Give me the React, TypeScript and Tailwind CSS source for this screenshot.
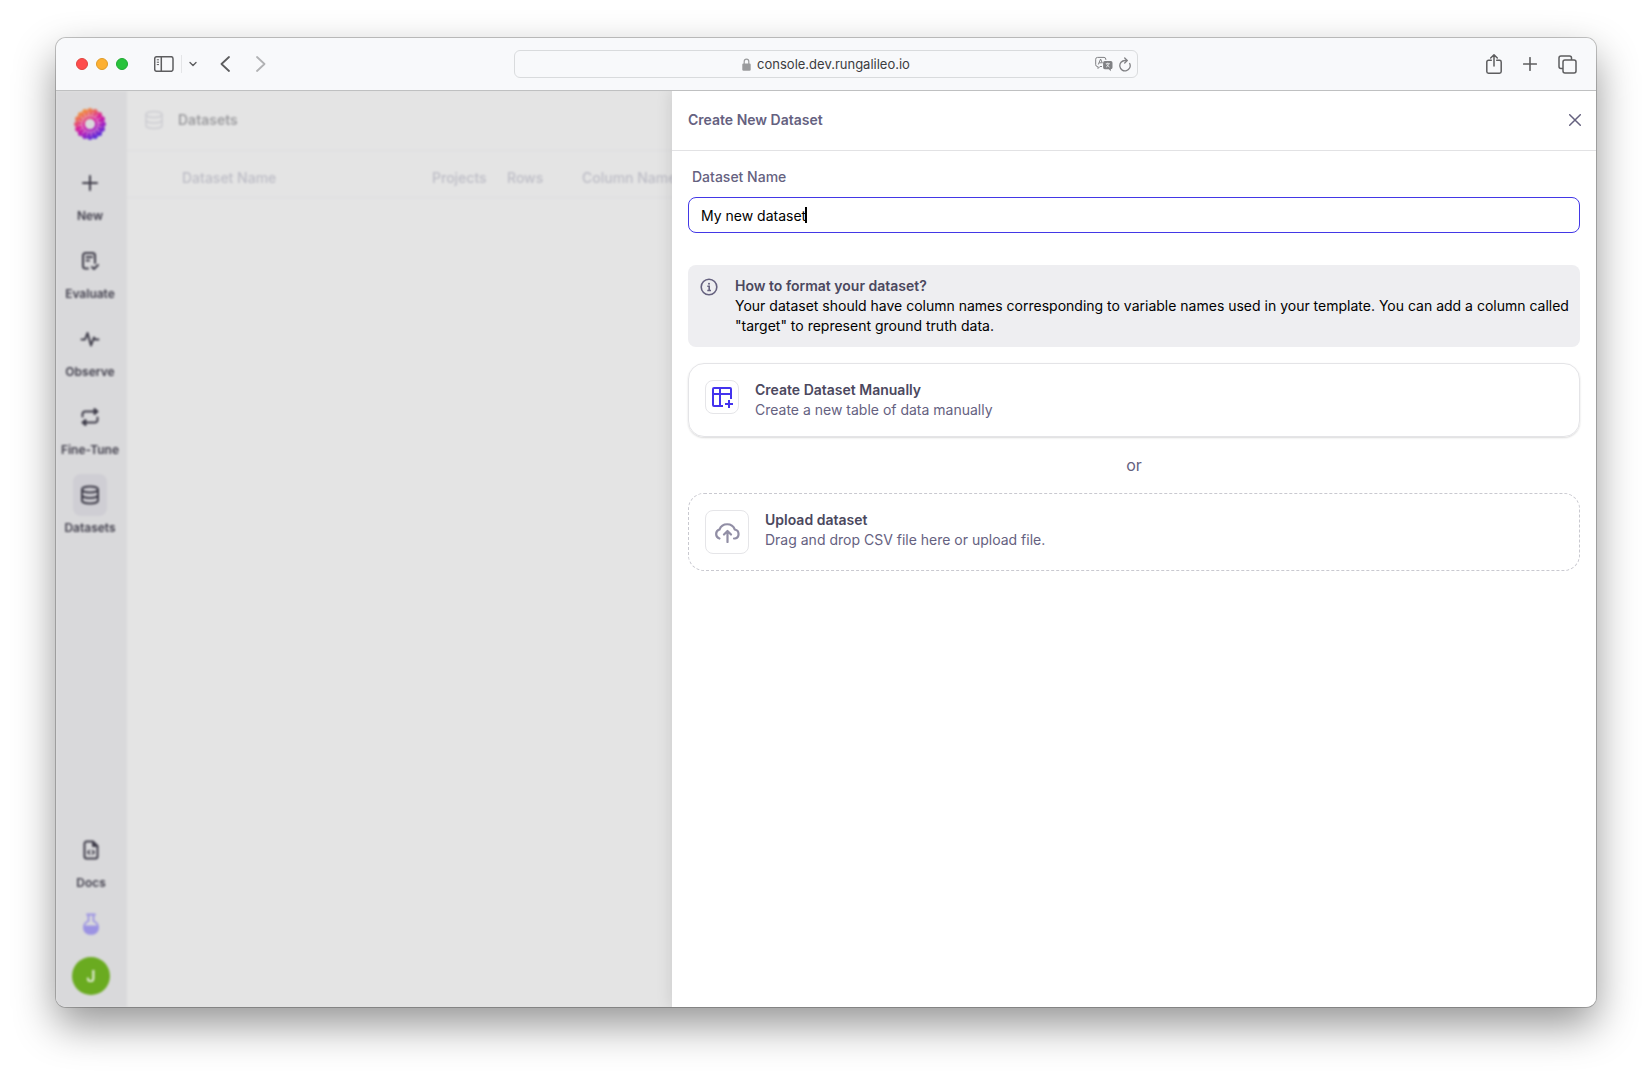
import { useState, type ReactNode } from "react";

function LogoIcon() {
  const petals = Array.from({ length: 16 }, (_, i) => i * 22.5);
  return (
    <svg viewBox="0 0 32 32" className="size-8" fill="none" aria-hidden="true">
      <defs>
        <linearGradient id="logo" gradientUnits="userSpaceOnUse" x1="8" y1="2" x2="24" y2="30">
          <stop offset="0" stopColor="#f39a3c" />
          <stop offset="0.2" stopColor="#ea6a5c" />
          <stop offset="0.45" stopColor="#d61e9c" />
          <stop offset="0.68" stopColor="#a820be" />
          <stop offset="1" stopColor="#4a30e0" />
        </linearGradient>
      </defs>
      <circle cx="16" cy="16" r="9.6" stroke="url(#logo)" strokeWidth="8.800" />
      {petals.map((a) => {
        const r = (a * Math.PI) / 180;
        return <circle key={a} cx={16 + Math.cos(r) * 13.3} cy={16 + Math.sin(r) * 13.3} r="2.6" fill="url(#logo)" />;
      })}
      {petals.map((a) => (
        <path
          key={a}
          d="M14.500 8.200c2.600.600 4.700-.800 4.700-3.600"
          transform={`rotate(${a} 16 16)`}
          stroke="#efc6e0"
          strokeWidth="0.900"
          strokeOpacity="0.800"
          strokeLinecap="round"
        />
      ))}
    </svg>
  );
}

function DatabaseIcon({ className, width = 2 }: { className: string; width?: number }) {
  return (
    <svg viewBox="0 0 20 20" className={className} fill="none" stroke="currentColor" strokeWidth={width} aria-hidden="true">
      <ellipse cx="10" cy="4.500" rx="8" ry="3" />
      <path d="M2 4.500v11c0 1.700 3.600 3 8 3s8-1.300 8-3v-11" />
      <path d="M2 10c0 1.700 3.600 3 8 3s8-1.300 8-3" />
    </svg>
  );
}

const stroke = {
  fill: "none",
  stroke: "currentColor",
  strokeWidth: 2,
  strokeLinecap: "round" as const,
  strokeLinejoin: "round" as const,
  "aria-hidden": true,
};

const icons: Record<string, ReactNode> = {
  New: (
    <svg viewBox="0 0 20 20" className="size-5" {...stroke}>
      <path d="M10 3v14M3 10h14" />
    </svg>
  ),
  Evaluate: (
    <svg viewBox="0 0 20 20" className="size-5" {...stroke}>
      <path d="M8 17.500H5.500A2.500 2.500 0 0 1 3 15V4.500A2.500 2.500 0 0 1 5.500 2h7A2.500 2.500 0 0 1 15 4.500V12" />
      <path d="M6.500 6H12M6.500 9.500H9" />
      <path d="m12 16 2 2 4-4" />
    </svg>
  ),
  Observe: (
    <svg viewBox="0 0 20 20" className="size-5" {...stroke}>
      <path d="M1.500 10.500H5L7.500 4l3.500 12.500 3-8 1 2h3.500" />
    </svg>
  ),
  "Fine-Tune": (
    <svg viewBox="0 0 20 20" className="size-5" {...stroke}>
      <path d="M2.500 9.500V7a2.500 2.500 0 0 1 2.500-2.500H15M17.500 10.500V13a2.500 2.500 0 0 1-2.500 2.500H5" />
      <path d="m14.500 2 3 2.500-3 2.500ZM5.500 13l-3 2.500 3 2.500Z" fill="currentColor" />
    </svg>
  ),
  Datasets: <DatabaseIcon className="size-5" />,
  Docs: (
    <svg viewBox="0 0 20 20" className="size-5" {...stroke}>
      <path d="M12 1.500H5.500a2 2 0 0 0-2 2v13a2 2 0 0 0 2 2h9a2 2 0 0 0 2-2V6Z" />
      <path d="M11.500 1.500V6.500h5Z" fill="currentColor" strokeWidth="1" />
      <path d="m8.500 10.500-1.700 1.700 1.700 1.700M11.500 10.500l1.700 1.700-1.700 1.700" strokeWidth="1.600" />
    </svg>
  ),
};

function NavItem({ label, active = false }: { label: string; active?: boolean }) {
  return (
    <a href="#" className="flex flex-col items-center gap-1 text-[#3f3d4a]">
      <span className={active ? "grid h-[42px] w-[34px] place-items-center rounded-lg bg-[#cfced4]" : "grid h-[42px] w-[34px] place-items-center"}>
        {icons[label]}
      </span>
      <span className="text-xs leading-4 font-semibold">{label}</span>
    </a>
  );
}

function BrowserBar() {
  return (
    <header className="grid h-[53px] shrink-0 grid-cols-[1fr_minmax(0,624px)_1fr] items-center border-b border-[#bfc0c1] bg-[#f8f9fb] text-[#5d5d5f]">
      <div className="flex items-center pl-5">
        <div className="flex gap-2">
          <span className="size-3 rounded-full border border-[#e0443e] bg-[#fe4c4c]" />
          <span className="size-3 rounded-full border border-[#df9b27] bg-[#fdb032]" />
          <span className="size-3 rounded-full border border-[#1fa932] bg-[#28c33c]" />
        </div>
        <button aria-label="Show sidebar" className="ml-[26px]">
          <svg viewBox="0 0 20 16" className="h-4 w-5" fill="none" stroke="currentColor" strokeWidth="1.500">
            <rect x="0.700" y="0.700" width="18.300" height="14.600" rx="2" />
            <path d="M7.300 1v14" />
            <path d="M2.800 3.800h2.200M2.800 6.200h2.200M2.800 8.600h2.200" strokeWidth="1" />
          </svg>
        </button>
        <span className="ml-[7px] h-[18px] w-px bg-[#e4e5e7]" />
        <button aria-label="Tab groups" className="ml-[7px]">
          <svg viewBox="0 0 8 6" className="h-1.5 w-2" fill="none" stroke="currentColor" strokeWidth="1.400" strokeLinecap="round" strokeLinejoin="round">
            <path d="m1 1.500 3 3 3-3" />
          </svg>
        </button>
        <button aria-label="Back" className="ml-[23px]">
          <svg viewBox="0 0 10 16" className="h-4 w-2.5" fill="none" stroke="currentColor" strokeWidth="1.800" strokeLinecap="round" strokeLinejoin="round">
            <path d="M9 1 1.500 8 9 15" />
          </svg>
        </button>
        <button aria-label="Forward" className="ml-[26px] text-[#b1b2b4]">
          <svg viewBox="0 0 10 16" className="h-4 w-2.5" fill="none" stroke="currentColor" strokeWidth="1.800" strokeLinecap="round" strokeLinejoin="round">
            <path d="m1 1 7.500 7L1 15" />
          </svg>
        </button>
      </div>
      <div className="flex h-7 items-center rounded-md border border-[#d9dbdd] px-1.5">
        <div className="w-9" />
        <div className="flex flex-1 items-center justify-center gap-1.5">
          <svg viewBox="0 0 9 13" className="h-[13px] w-[9px] text-[#9a9b9d]" aria-hidden="true">
            <path d="M2.200 6V3.500a2.300 2.300 0 0 1 4.600 0V6" fill="none" stroke="currentColor" strokeWidth="1.200" />
            <rect x="0.300" y="5.500" width="8.400" height="7.200" rx="1.200" fill="currentColor" />
          </svg>
          <span className="text-[13px] leading-4 text-[#3c3c3e]">console.dev.rungalileo.io</span>
        </div>
        <div className="flex w-9 items-center justify-between text-[#808184]">
          <button aria-label="Translate">
            <svg viewBox="0 0 18 16" className="h-4 w-[18px]" fill="none" stroke="currentColor">
              <path d="M7 10.500H5L3 12.500v-2H2.500A1.800 1.800 0 0 1 .700 8.700v-5.500A1.800 1.800 0 0 1 2.500 1.400h6.500a1.800 1.800 0 0 1 1.800 1.800V4" />
              <path d="m3.300 8.500 2.300-5.500 1.800 4.200M4.200 6.800h2.700" />
              <path d="M9.800 5h6a1.700 1.700 0 0 1 1.700 1.700v4.800a1.700 1.700 0 0 1-1.700 1.700v2l-2-2h-4a1.700 1.700 0 0 1-1.700-1.700V6.700A1.700 1.700 0 0 1 9.800 5Z" fill="currentColor" stroke="none" />
              <path d="M10.800 7.600h4M12.800 6.600v1M11.500 7.800c.600 1.500 1.600 2.600 3.100 3.400M14.100 7.800c-.600 1.500-1.600 2.600-3.100 3.400" stroke="#f8f9fb" strokeWidth="0.700" />
            </svg>
          </button>
          <button aria-label="Reload">
            <svg viewBox="0 0 12 15" className="h-[15px] w-3" fill="none" stroke="currentColor" strokeWidth="1.300" strokeLinecap="round" strokeLinejoin="round">
              <path d="M10.700 6.500A5.200 5.200 0 1 1 6 3.500h2" />
              <path d="M5.700 1 8.200 3.500 5.700 6" />
            </svg>
          </button>
        </div>
      </div>
      <div className="flex items-center justify-end gap-[21px] pr-[19px]">
        <button aria-label="Share">
          <svg viewBox="0 0 16 20" className="h-5 w-4" fill="none" stroke="currentColor" strokeWidth="1.500" strokeLinecap="round" strokeLinejoin="round">
            <path d="M5.300 6.200H2.500A1.700 1.700 0 0 0 .800 7.900v9.600a1.700 1.700 0 0 0 1.700 1.700h11a1.700 1.700 0 0 0 1.700-1.700V7.900a1.700 1.700 0 0 0-1.700-1.700h-2.800" />
            <path d="M8 12V1M4.700 4 8 .800 11.300 4" />
          </svg>
        </button>
        <button aria-label="New tab">
          <svg viewBox="0 0 14 14" className="size-3.5" fill="none" stroke="currentColor" strokeWidth="1.600" strokeLinecap="round">
            <path d="M7 .700v12.600M.700 7h12.600" />
          </svg>
        </button>
        <button aria-label="Show tabs">
          <svg viewBox="0 0 19 19" className="size-[19px]" fill="none" stroke="currentColor" strokeWidth="1.500" strokeLinejoin="round">
            <rect x="5" y="5" width="13" height="13" rx="2" />
            <path d="M5 13.500H3a2 2 0 0 1-2-2V3a2 2 0 0 1 2-2h8.500a2 2 0 0 1 2 2v2" />
          </svg>
        </button>
      </div>
    </header>
  );
}

function Sidebar() {
  return (
    <nav className="flex w-[71px] shrink-0 flex-col items-center bg-[#d9d9db] pt-[17px] pr-px pb-3">
      <div className="flex flex-col items-center pr-0.5">
        <a href="#" aria-label="Home">
          <LogoIcon />
        </a>
        <div className="mt-[22px] flex flex-col gap-4">
          <NavItem label="New" />
          <NavItem label="Evaluate" />
          <NavItem label="Observe" />
          <NavItem label="Fine-Tune" />
          <NavItem label="Datasets" active />
        </div>
      </div>
      <div className="mt-auto flex flex-col items-center">
        <NavItem label="Docs" />
        <button aria-label="Labs" className="mt-[22px] text-[#9c93e3]">
          <svg viewBox="0 0 16 22" className="h-[22px] w-4" fill="none" stroke="currentColor" strokeWidth="1.800" strokeLinecap="round">
            <path d="M4 1.500h8M5.500 1.500V8A7 6.700 0 0 0 5.500 20.500h5A7 6.700 0 0 0 10.500 8V1.500" />
            <path d="M1.500 13.500h13v1.500a5 5 0 0 1-4 5.500h-5a5 5 0 0 1-4-5.500Z" fill="currentColor" />
          </svg>
        </button>
        <button className="mt-[22px] grid size-[38px] place-items-center rounded-full bg-[#6aab20] text-base leading-5 font-semibold text-[#e3ecd8]">J</button>
      </div>
    </nav>
  );
}

function DatasetsPage() {
  return (
    <main className="min-w-0 flex-1 bg-[#e4e4e4]">
      <div className="flex h-[60px] items-center gap-3.5 border-b border-[#dddddf] pb-0.5 pl-[17px]">
        <DatabaseIcon className="size-5 text-[#cdcdd2]" width={1.5} />
        <h1 className="text-sm font-semibold text-[#9d9da0]">Datasets</h1>
      </div>
      <table className="w-full table-fixed text-left text-sm text-[#bdbdc6]">
        <colgroup>
          <col className="w-[55px]" />
          <col className="w-[250px]" />
          <col className="w-[75px]" />
          <col className="w-[75px]" />
          <col />
        </colgroup>
        <thead>
          <tr className="border-b border-[#dddddf]">
            <td />
            <th className="pt-[17px] pb-[9px] font-medium">Dataset Name</th>
            <th className="pt-[17px] pb-[9px] font-medium">Projects</th>
            <th className="pt-[17px] pb-[9px] font-medium">Rows</th>
            <th className="pt-[17px] pb-[9px] font-medium">Column Names</th>
          </tr>
        </thead>
      </table>
    </main>
  );
}

function CreateDatasetDrawer() {
  const [name, setName] = useState("My new dataset");
  return (
    <section aria-label="Create New Dataset" className="absolute inset-y-0 right-0 w-3/5 bg-white text-sm shadow-[0_0_16px_rgba(0,0,0,0.12)]">
      <div className="flex h-[60px] items-center justify-between border-b border-[#e2e2e4] pr-[15px] pb-0.5 pl-4 text-[#65617f]">
        <h2 className="font-semibold">Create New Dataset</h2>
        <button aria-label="Close">
          <svg viewBox="0 0 12 12" className="size-3" fill="none" stroke="currentColor" strokeWidth="1.500" strokeLinecap="round">
            <path d="m.700.700 10.600 10.600M11.300.700.700 11.300" />
          </svg>
        </button>
      </div>
      <div className="flex flex-col px-4 pt-4">
        <label htmlFor="dataset-name" className="pl-1 font-medium text-[#65617f]">
          Dataset Name
        </label>
        <div className="relative mt-2.5">
          <input
            id="dataset-name"
            value={name}
            onChange={(e) => setName(e.target.value)}
            className="block h-9 w-full rounded-lg border border-[#4338e6] px-3 text-sm text-black caret-transparent outline-none"
          />
          <span className="absolute top-2.5 left-[117px] h-4 w-0.5 bg-black" />
        </div>
        <div className="mt-8 flex gap-4 rounded-lg bg-[#eeeef1] p-[11px]">
          <svg viewBox="0 0 20 20" className="mt-0.5 size-5 shrink-0 text-[#65617f]" fill="none" stroke="currentColor" strokeWidth="1.600" aria-hidden="true">
            <circle cx="10" cy="9" r="7.800" />
            <path d="M8.300 8.300h1.900v4.200M8.300 12.500h3.700" />
            <circle cx="10" cy="5.700" r="1" fill="currentColor" stroke="none" />
          </svg>
          <div>
            <h3 className="font-semibold text-[#4b485e]">How to format your dataset?</h3>
            <p className="text-black">
              Your dataset should have column names corresponding to variable names used in your template. You can add a column called "target" to represent ground truth data.
            </p>
          </div>
        </div>
        <button className="mt-4 flex gap-4 rounded-2xl border border-[#e4e4e7] p-4 text-left shadow-[0_1px_2px_rgba(0,0,0,0.15)]">
          <span className="grid size-[34px] shrink-0 place-items-center rounded-lg border border-[#e5e5e8] text-[#4433ee]">
            <svg viewBox="0 0 22 22" className="size-[22px]" fill="none" stroke="currentColor" strokeWidth="2" aria-hidden="true">
              <path d="M12 20H3a1 1 0 0 1-1-1V3a1 1 0 0 1 1-1h16a1 1 0 0 1 1 1v10" />
              <path d="M2 8h18M9 2v18M14 18h8M18 14v8" />
            </svg>
          </span>
          <span className="flex flex-col">
            <span className="font-semibold text-[#4b485e]">Create Dataset Manually</span>
            <span className="text-[#65617f]">Create a new table of data manually</span>
          </span>
        </button>
        <p className="my-4 text-center text-base text-[#65617f]">or</p>
        <button className="flex gap-4 rounded-2xl border border-dashed border-[#c9c9d0] p-4 text-left">
          <span className="grid size-11 shrink-0 place-items-center rounded-lg border border-[#e5e5e8] text-[#918ea5]">
            <svg viewBox="0 0 26 22" className="h-[22px] w-[26px]" fill="none" stroke="currentColor" strokeWidth="2.200" strokeLinecap="round" strokeLinejoin="round" aria-hidden="true">
              <path d="M5.500 17.500A4.700 4.700 0 0 1 5.500 8.500 8.200 8.200 0 0 1 20.800 8.500 4.600 4.600 0 0 1 21 17.500h-1" />
              <path d="M13.500 21V10.500M10 13.500l3.500-3.500 3.500 3.500" />
            </svg>
          </span>
          <span className="flex flex-col">
            <span className="font-semibold text-[#4b485e]">Upload dataset</span>
            <span className="text-[#65617f]">Drag and drop CSV file here or upload file.</span>
          </span>
        </button>
      </div>
    </section>
  );
}

export default function App() {
  return (
    <div className="flex min-h-screen flex-col bg-white px-14 pt-[38px] pb-[74px] font-['Inter',sans-serif]">
      <div className="flex flex-1 flex-col overflow-hidden rounded-[10px] shadow-[0_0_0_1px_rgba(0,0,0,0.22),0_18px_42px_rgba(0,0,0,0.42)]">
        <BrowserBar />
        <div className="relative flex flex-1 overflow-hidden bg-[#e0e0e1]">
          <div className="flex flex-1 blur-[1px]">
            <Sidebar />
            <DatasetsPage />
          </div>
          <CreateDatasetDrawer />
        </div>
      </div>
    </div>
  );
}
